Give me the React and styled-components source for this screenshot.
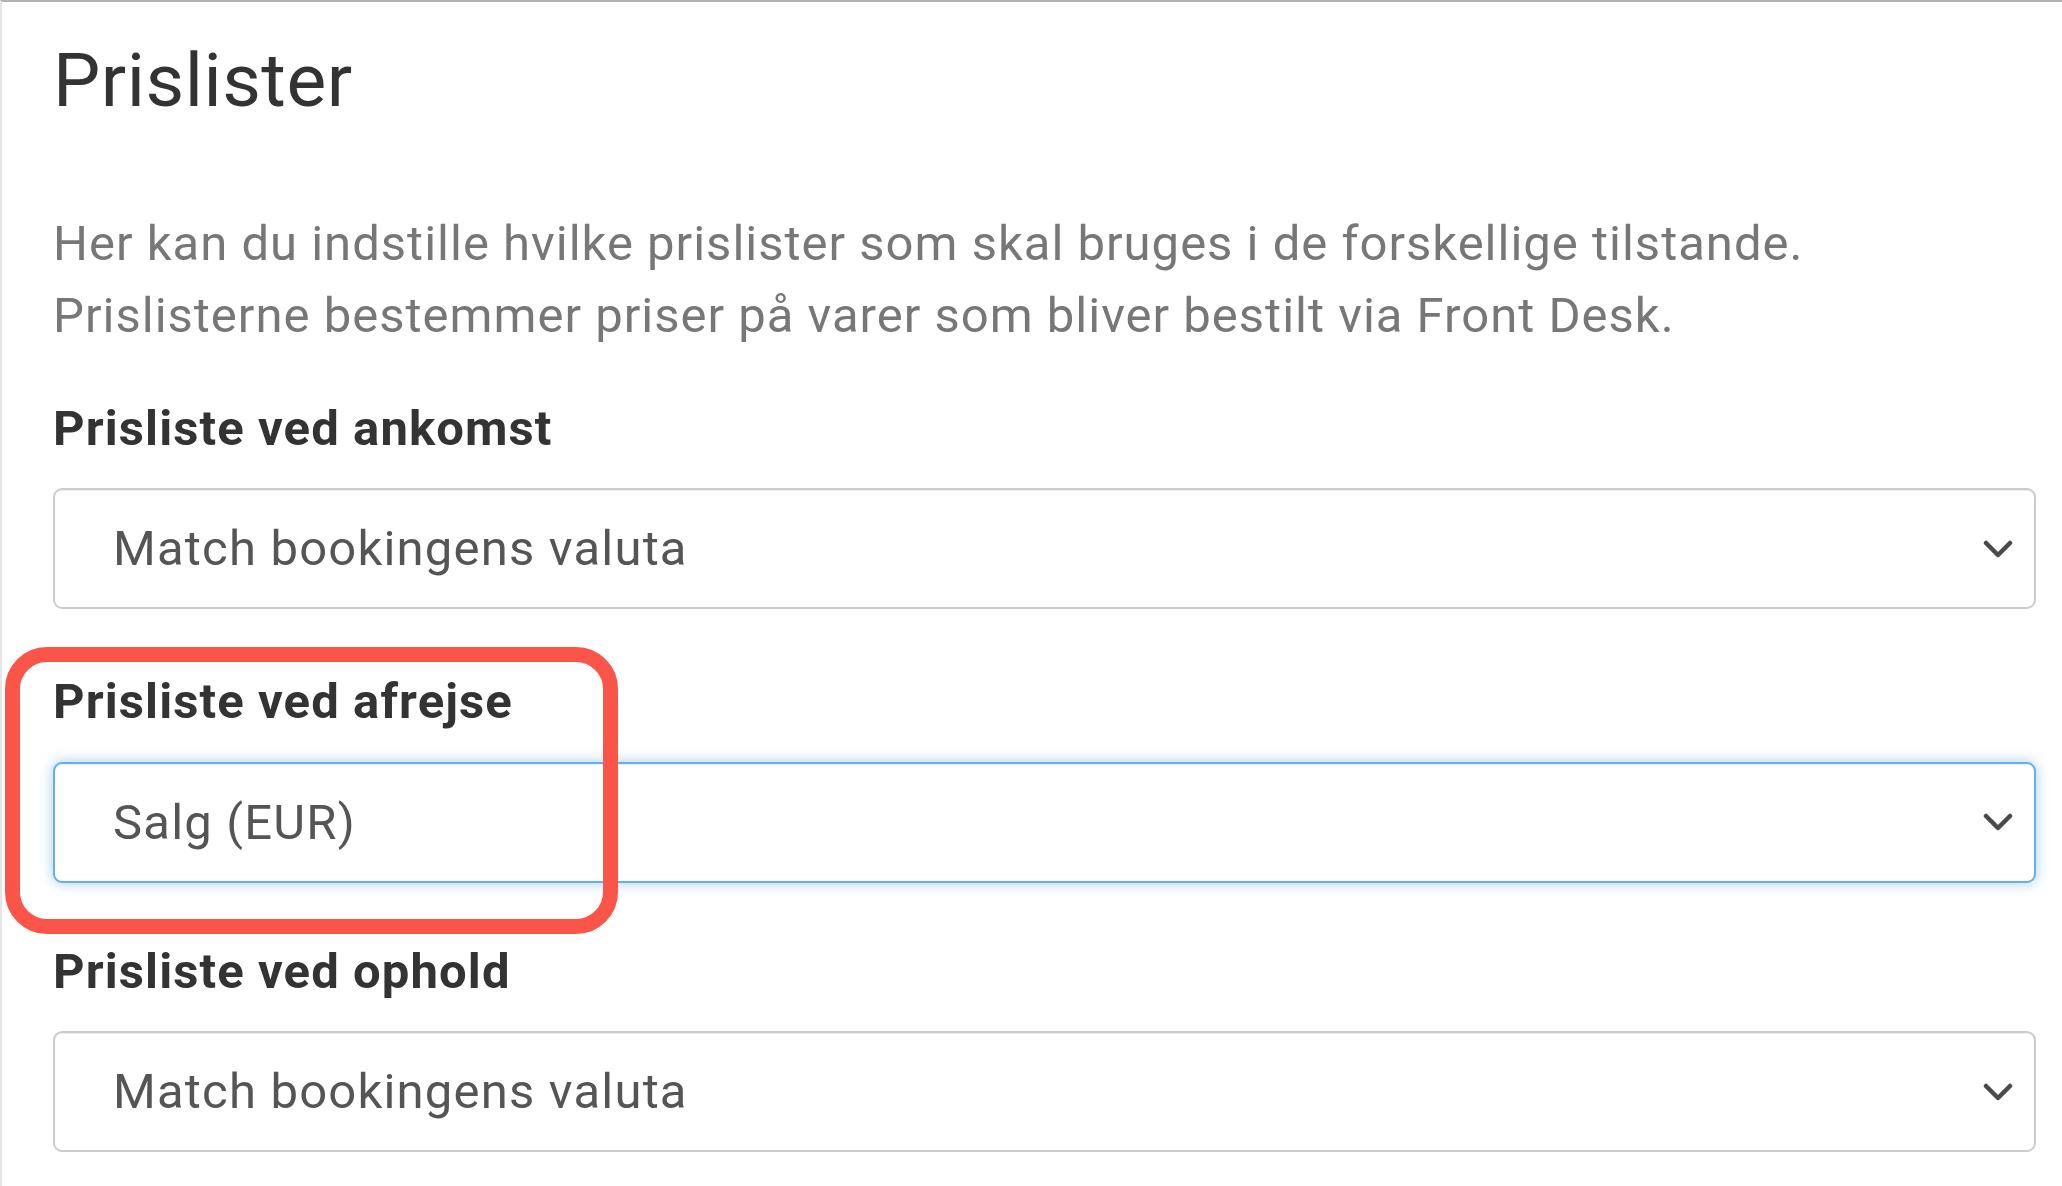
import styled, { createGlobalStyle } from "styled-components";

const GlobalStyle = createGlobalStyle`
  html, body {
    margin: 0;
    padding: 0;
    background: #ffffff;
  }
  body {
    font-family: Roboto, "Liberation Sans", Arial, sans-serif;
  }
`;

const Page = styled.div`
  min-height: 100vh;
  box-sizing: border-box;
  border-top: 2px solid #b4b4b4;
  border-left: 2px solid #e6e6e6;
  padding: 35px 26px 0 51px;
  background: #ffffff;
`;

const Title = styled.h1`
  margin: 0;
  font-size: 75px;
  font-weight: 400;
  line-height: 1.172;
  letter-spacing: 0.5px;
  color: #333333;
`;

const Intro = styled.p`
  margin: 83px 0 48px;
  font-size: 49px;
  line-height: 72px;
  letter-spacing: 1px;
  color: #777777;
`;

const Field = styled.div`
  position: relative;
  margin-bottom: ${(props) => props.$gap || "64px"};
`;

const Label = styled.label`
  display: block;
  margin-bottom: 31px;
  font-size: 49px;
  font-weight: 700;
  line-height: 1.172;
  letter-spacing: 1.1px;
  color: #333333;
`;

const SelectBox = styled.div`
  height: 121px;
  box-sizing: border-box;
  display: flex;
  align-items: center;
  justify-content: space-between;
  padding: 0 21px 0 58px;
  border: 2px solid ${(props) => (props.$focused ? "#66afe9" : "#cccccc")};
  border-radius: 9px;
  background: #ffffff;
  box-shadow: ${(props) =>
    props.$focused
      ? "inset 0 1px 1px rgba(0,0,0,.075), 0 0 14px rgba(102,175,233,.6)"
      : "inset 0 1px 1px rgba(0,0,0,.075)"};
  font-size: 49px;
  letter-spacing: 1.2px;
  color: #555555;
`;

const Chevron = styled.svg`
  width: 30px;
  height: 20px;
  flex-shrink: 0;
`;

const Highlight = styled.div`
  position: absolute;
  left: -48px;
  top: -26px;
  width: 613px;
  height: 287px;
  box-sizing: border-box;
  border: 15px solid #fb5549;
  border-radius: 42px;
  pointer-events: none;
`;

const ArrowDown = () => (
  <Chevron viewBox="0 0 30 20">
    <path
      d="M3 4 L15 16 L27 4"
      fill="none"
      stroke="#4a4a4a"
      strokeWidth="4.5"
      strokeLinecap="round"
      strokeLinejoin="round"
    />
  </Chevron>
);

const Select = ({ value, focused }) => (
  <SelectBox $focused={focused}>
    <span>{value}</span>
    <ArrowDown />
  </SelectBox>
);

const App = () => {
  return (
    <>
      <GlobalStyle />
      <Page>
        <Title>Prislister</Title>
        <Intro>
          Her kan du indstille hvilke prislister som skal bruges i de forskellige tilstande.
          <br />
          Prislisterne bestemmer priser på varer som bliver bestilt via Front Desk.
        </Intro>

        <Field>
          <Label>Prisliste ved ankomst</Label>
          <Select value="Match bookingens valuta" />
        </Field>

        <Field $gap="60px">
          <Label>Prisliste ved afrejse</Label>
          <Select value="Salg (EUR)" focused />
          <Highlight />
        </Field>

        <Field>
          <Label>Prisliste ved ophold</Label>
          <Select value="Match bookingens valuta" />
        </Field>
      </Page>
    </>
  );
};

export default App;
